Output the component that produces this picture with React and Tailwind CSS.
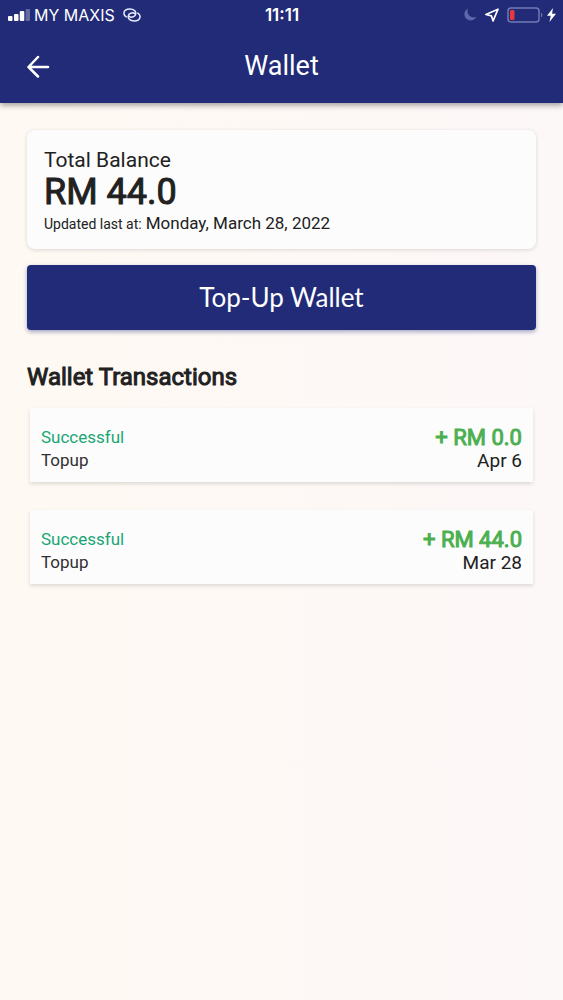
import React from "react";

const transactions = [
  { id: 1, status: "Successful", type: "Topup", amount: "+ RM 0.0", date: "Apr 6" },
  { id: 2, status: "Successful", type: "Topup", amount: "+ RM 44.0", date: "Mar 28" },
];

const SignalIcon = () => (
  <svg width="22" height="12" viewBox="0 0 22 12" fill="#fff">
    <rect x="0" y="7" width="4.500" height="5" rx="1" />
    <rect x="6" y="5" width="4.500" height="7" rx="1" />
    <rect x="11.800" y="2" width="4.500" height="10" rx="1" />
    <rect x="17.600" y="0" width="4.400" height="12" rx="1" opacity="0.3" />
  </svg>
);

// two interlocked links
const HotspotIcon = () => (
  <svg width="18" height="14" viewBox="0 0 18 14" fill="none" stroke="#e8eaff" strokeWidth="1.500" strokeLinecap="round">
    <path d="M3.200 8.900C.4 7.300.2 3.900 2.500 2.200 4.800.5 9.200.6 11.300 2.300c2.300 1.900 1.900 5.400-1 6.400-1.400.5-3.300.4-3.800-.4" />
    <path d="M14.800 5.100c2.800 1.600 3 5 .7 6.700-2.300 1.700-6.700 1.600-8.800-.1-2.300-1.900-1.900-5.400 1-6.400 1.400-.5 3.300-.4 3.800.4" />
  </svg>
);

const StatusBar = () => (
  <div className="grid grid-cols-[1fr_auto_1fr] items-center h-[29px] pl-2 pr-[7px] text-white font-['Inter',sans-serif]">
    <div className="flex items-center gap-1">
      <SignalIcon />
      <span className="text-[16px] leading-5">MY MAXIS</span>
      <span className="pl-1"><HotspotIcon /></span>
    </div>
    <span className="text-[17px] leading-5 font-semibold">11:11</span>
    <div className="flex items-center justify-end">
      <svg className="mr-2" width="13" height="13" viewBox="0 0 13 13" fill="#5f65ab">
        <path d="M4 .6C.8 2 -.5 5.800 1 8.900c1.600 3.200 5.500 4.400 8.600 2.800 1.300-.7 2.300-1.700 2.800-2.900-2.500 1-5.600.6-7.300-1.500C3.400 5.300 3.200 2.700 4 .6z" />
      </svg>
      <svg className="mr-2" width="14" height="14" viewBox="0 0 14 14" fill="none" stroke="#fff" strokeWidth="1.700" strokeLinejoin="round">
        <path d="M13 1.200.9 6.500l5.500 1.300 1.700 5.200z" />
      </svg>
      <svg className="mr-1" width="36" height="16" viewBox="0 0 36 16" fill="none">
        <rect x="1" y="1" width="31" height="14" rx="3" stroke="#7478b4" strokeWidth="1.500" />
        <rect x="3" y="3" width="4.500" height="10" rx="1.500" fill="#e8383c" />
        <path d="M34 5.500c1.700.8 1.700 4.200 0 5z" fill="#7478b4" />
      </svg>
      <svg width="9" height="14" viewBox="0 0 8 14" preserveAspectRatio="none" fill="#fff">
        <path d="M5.300 0 0 7.800h3.300L2.200 14 8 5.700H4.500z" />
      </svg>
    </div>
  </div>
);

const Header = () => (
  <header className="bg-[#222b78] text-white shadow-[0_2px_6px_rgba(0,0,0,0.4)]">
    <StatusBar />
    <div className="grid grid-cols-[1fr_auto_1fr] items-center h-[74px] px-[26px]">
      <button type="button" aria-label="Back" className="justify-self-start">
        <svg width="24" height="24" viewBox="0 0 24 24" fill="none" stroke="#fff" strokeWidth="2.500" strokeLinecap="round" strokeLinejoin="round">
          <path d="M22 13H2.500M12 3 2.500 13l9.500 9.500" />
        </svg>
      </button>
      <h1 className="text-[27px] leading-9">Wallet</h1>
    </div>
  </header>
);

const BalanceCard = () => (
  <section className="bg-[#fcfcfc] rounded-lg px-[17px] pt-[18px] pb-[14px] shadow-[0_1px_4px_rgba(0,0,0,0.14)]">
    <div className="text-[21px] leading-6">Total Balance</div>
    <div className="text-[36px] leading-10 [-webkit-text-stroke:1px]">RM 44.0</div>
    <div className="flex items-baseline gap-1 leading-[22px]">
      <span className="text-[14px]">Updated last at:</span>
      <span className="text-[17px]">Monday, March 28, 2022</span>
    </div>
  </section>
);

const TransactionItem = ({ item }) => (
  <li className="flex justify-between bg-[#fcfcfd] px-[11px] pt-[18px] pb-[10px] shadow-[0_2px_4px_rgba(0,0,0,0.13)]">
    <div className="text-[17px] leading-[23px]">
      <div className="text-[#1aa673]">{item.status}</div>
      <div className="text-[#303030]">{item.type}</div>
    </div>
    <div className="text-right">
      <div className="text-[22px] leading-6 text-[#4caf50] [-webkit-text-stroke:1px]">{item.amount}</div>
      <div className="text-[19px] leading-[22px]">{item.date}</div>
    </div>
  </li>
);

const App = () => {
  return (
    <div className="flex flex-col min-h-screen bg-linear-to-r from-[#fef9f2] to-[#fdf8f8] text-[#212121] font-['Roboto',sans-serif]">
      <Header />
      <main className="px-[27px] pt-[27px]">
        <BalanceCard />
        <button
          type="button"
          className="w-full h-[65px] mt-4 rounded bg-[#222b78] text-white text-[26px] font-['Lato',sans-serif] shadow-[0_2px_4px_rgba(34,43,120,0.4)]"
        >
          Top-Up Wallet
        </button>
        <h2 className="mt-8 text-[24px] leading-[30px] [-webkit-text-stroke:1px]">Wallet Transactions</h2>
        <ul className="flex flex-col gap-7 mt-4 px-[3px]">
          {transactions.map((t) => (
            <TransactionItem key={t.id} item={t} />
          ))}
        </ul>
      </main>
    </div>
  );
};

export default App;
